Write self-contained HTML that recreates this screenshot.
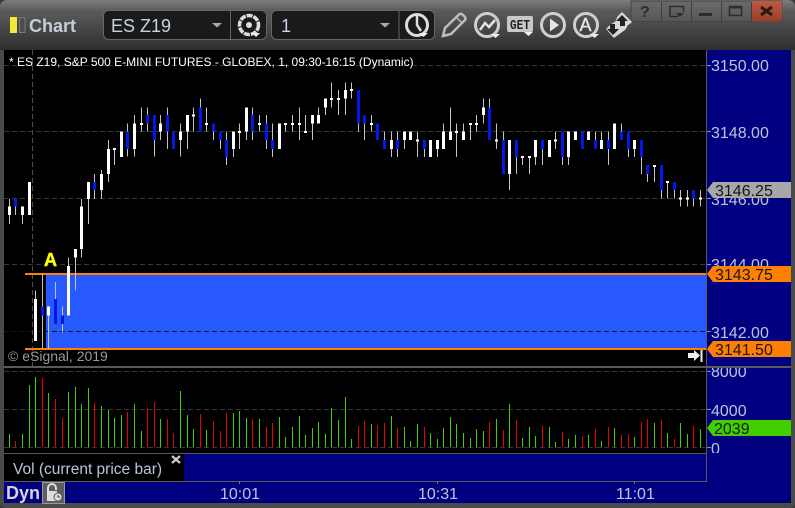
<!DOCTYPE html>
<html><head><meta charset="utf-8"><style>
html,body{margin:0;padding:0;background:#3a3a3a;width:795px;height:508px;overflow:hidden}
svg{display:block}
text{font-family:"Liberation Sans",sans-serif}
.ax{font-size:16px;fill:#b9c6dc}
.tg{font-size:16px;fill:#161616}
</style></head><body>
<svg width="795" height="508" viewBox="0 0 795 508" xmlns="http://www.w3.org/2000/svg">
<defs>
<linearGradient id="top" x1="0" y1="0" x2="0" y2="1"><stop offset="0" stop-color="#7c7c7c"/><stop offset=".1" stop-color="#6f6f6f"/><stop offset=".2" stop-color="#5c5c5c"/><stop offset="1" stop-color="#2e2e2e"/></linearGradient>
<linearGradient id="btn" x1="0" y1="0" x2="0" y2="1"><stop offset="0" stop-color="#6a6a6a"/><stop offset="1" stop-color="#575757"/></linearGradient>
<linearGradient id="cls" x1="0" y1="0" x2="0" y2="1"><stop offset="0" stop-color="#bd5a44"/><stop offset="1" stop-color="#9a3f2b"/></linearGradient>
</defs>
<!-- frame -->
<rect width="795" height="508" rx="6" fill="#4a4a4a"/>
<path d="M0 50V8Q0 0 8 0H787Q795 0 795 8V50Z" fill="url(#top)"/>
<!-- chart background -->
<rect x="4" y="50" width="702" height="317" fill="#000"/>
<rect x="707" y="50" width="84" height="453" fill="#000080"/>
<rect x="4" y="368" width="702" height="85" fill="#000"/>
<rect x="4" y="454" width="180" height="27" fill="#000"/>
<rect x="184" y="454" width="522" height="27" fill="#000080"/>
<rect x="4" y="482" width="703" height="21" fill="#000080"/>
<!-- blue zone -->
<rect x="46" y="274" width="660" height="75" fill="#2659ff"/>
<!-- grid -->
<g stroke="#363636" stroke-width="1" stroke-dasharray="5 3" shape-rendering="crispEdges">
<path d="M4 65.5H706M4 131.5H706M4 198.5H706M4 264.5H706M4 371.5H706M4 409.5H706M4 447.5H706"/>
<path d="M4 331.5H706" stroke="#141414"/>
<path d="M32.5 50V366" stroke="#4c4c4c"/>
</g>
<!-- header -->
<text x="9" y="66" font-size="12" fill="#fff">* ES Z19, S&amp;P 500 E-MINI FUTURES - GLOBEX, 1, 09:30-16:15 (Dynamic)</text>
<!-- zone borders -->
<rect x="25" y="273" width="681" height="2" fill="#ff8000"/>
<rect x="25" y="348" width="681" height="2" fill="#ff8000"/>
<!-- candles -->
<g shape-rendering="crispEdges" fill="none">
<g transform="translate(0 170) scale(.33333)">
<path stroke="#c4c4c4" stroke-width="3" d="M28 87V162M46 87V135M67 110V162M107 362V513M127 312V537M145 410V537M166 336V462M187 410V487M205 262V437M226 237V362M245 87V262M265 87V162M284 12V87M304 0V87M325 0V36"/>
<path stroke="#fff" stroke-width="9" d="M28 110V135M67 110V135M88 36V135M107 387V513M145 410V437M205 288V437M226 237V262M245 110V237M265 36V87M304 12V60M325 0V12"/>
<path stroke="#0018e8" stroke-width="9" d="M46 87V110M127 410V437M166 387V462M187 437V462M284 36V60"/>
</g>
<g transform="translate(100 80) scale(.33333)">
<path stroke="#c4c4c4" stroke-width="3" d="M25 180V300M44 205V255M83 130V230M103 105V230M124 82V155M143 82V155M163 105V230M182 105V180M202 82V207M241 130V230M262 105V207M281 82V155M301 55V155M320 82V155M340 130V180M361 155V207M380 155V255M400 155V231M418 130V207M439 82V180M458 82V180M478 105V155M499 105V207M518 130V231M557 130V155M577 105V155M598 82V180M617 105V155M637 105V180M656 82V130M677 55V105M695 7V82M716 30V105M736 7V105M755 7V55M775 30V155M794 105V180M814 105V155M832 130V180M853 155V207M874 155V231M893 155V231M913 155V207"/>
<path stroke="#fff" stroke-width="9" d="M25 207V282M44 204V210M65 155V231M103 130V207M124 129V135M182 130V155M241 155V180M262 105V155M281 104V110M320 129V135M400 155V207M418 153V159M439 82V155M478 129V135M538 130V207M557 129V135M577 129V135M598 129V135M617 153V159M637 105V130M656 105V130M677 55V82M695 54V60M716 54V60M736 30V55M755 27V33M814 129V135M874 180V207M913 155V180"/>
<path stroke="#0018e8" stroke-width="9" d="M83 155V207M143 105V130M163 105V180M202 105V155M221 155V207M301 82V155M340 130V155M361 155V180M380 180V231M458 105V155M499 130V180M518 180V207M775 30V130M794 105V130M832 130V180M853 180V207M893 180V207"/>
</g>
<g transform="translate(400 80) scale(.33333)">
<path stroke="#c4c4c4" stroke-width="3" d="M52 155V231M73 180V231M112 180V231M131 130V207M151 82V180M170 130V231M190 130V180M211 130V180M229 105V155M250 55V130M268 55V180M289 130V207M310 155V282M328 180V330M349 180V282M367 231V255M388 231V282M406 180V255M427 180V255M466 155V207M487 155V255M505 155V255M586 155V207M604 155V207M625 155V255M664 130V180M685 155V231M703 180V231M724 180V282M743 255V306M763 255V306M784 255V356M802 306V356M823 306V356M841 330V380M862 330V380M880 330V380M901 330V380"/>
<path stroke="#fff" stroke-width="9" d="M32 155V180M52 179V185M92 180V231M112 180V207M131 155V207M151 155V180M170 153V159M190 155V180M211 129V135M229 129V135M250 82V105M289 179V185M328 180V282M367 228V234M388 228V234M406 180V231M448 180V231M466 179V185M505 155V231M526 155V180M565 155V180M604 180V207M643 130V207M703 180V207M763 255V261M802 303V309M841 353V359M862 353V359M901 353V359"/>
<path stroke="#0018e8" stroke-width="9" d="M73 180V207M268 82V180M310 180V282M349 180V231M427 180V207M487 155V231M547 155V207M586 180V207M625 180V207M664 155V180M685 155V207M724 180V231M743 255V282M784 255V330M823 306V330M880 330V356"/>
</g>
<!-- volume -->
<g transform="translate(0 365) scale(.33333)" stroke-width="3">
<path stroke="#3fd000" d="M28 207V248M67 207V248M88 60V248M107 36V248M145 84V248M205 81V248M226 66V248M244 117V248M265 69V248M304 123V248M325 135V248M343 159V248M364 150V248M403 117V248M424 198V248M481 162V248M541 78V248M562 150V248M580 192V248M619 195V248M700 144V248M718 138V248M739 159V248M778 162V248"/>
<path stroke="#e60000" d="M46 228V248M127 39V248M166 102V248M187 159V248M283 114V248M382 141V248M442 129V248M463 111V248M502 162V248M520 204V248M601 147V248M640 168V248M661 198V248M679 144V248M757 162V248"/>
</g>
<g transform="translate(260 365) scale(.33333)" stroke-width="3">
<path stroke="#3fd000" d="M58 156V248M76 216V248M97 186V248M118 153V248M136 210V248M157 189V248M175 171V248M196 207V248M214 129V248M235 165V248M256 96V248M274 222V248M334 177V248M394 153V248M433 186V248M451 228V248M472 177V248M511 204V248M532 222V248M550 189V248M571 156V248M589 177V248M610 204V248M631 219V248M649 192V248M670 198V248M709 162V248M748 117V248"/>
<path stroke="#e60000" d="M19 186V248M37 174V248M295 183V248M313 168V248M352 180V248M373 174V248M412 189V248M493 186V248M688 171V248M730 195V248M769 165V248"/>
</g>
<g transform="translate(520 340) scale(.33333)" stroke-width="3">
<path stroke="#3fd000" d="M7 294V323M28 261V323M46 288V323M88 261V323M106 306V323M145 297V323M166 285V323M205 285V323M244 303V323M283 264V323M343 291V323M403 249V323M442 279V323M481 249V323M502 282V323M541 267V323"/>
<path stroke="#e60000" d="M67 258V323M127 276V323M187 288V323M226 267V323M265 261V323M304 285V323M325 282V323M364 246V323M382 237V323M424 240V323M463 297V323M520 258V323"/>
</g>
</g>
<text x="44" y="266" font-size="18" font-weight="700" fill="#ffff00" stroke="#ffff00" stroke-width=".4">A</text>
<text x="8" y="361" font-size="14" fill="#9a9a9a">© eSignal, 2019</text>
<!-- jump to end icon -->
<path d="M688 353H694V350L700 355.500L694 361V358H688Z" fill="#eee"/>
<rect x="700.500" y="350" width="2" height="12" fill="#eee"/>
<!-- dividers -->
<g shape-rendering="crispEdges">
<rect x="4" y="366" width="787" height="2" fill="#5a5a5a"/>
<rect x="706" y="50" width="1" height="431" fill="#5a5a5a"/>
<rect x="4" y="453" width="702" height="1" fill="#5a5a5a"/>
<rect x="4" y="481" width="703" height="1" fill="#5a5a5a"/>
<rect x="239" y="481" width="1" height="3" fill="#777"/>
<rect x="437" y="481" width="1" height="3" fill="#777"/>
<rect x="634" y="481" width="1" height="3" fill="#777"/>
<path d="M707 65.500H711M707 131.500H711M707 198.500H711M707 264.500H711M707 331.500H711M707 371.500H711M707 409.500H711M707 447.500H711" stroke="#8a94a8"/>
</g>
<!-- axis -->
<text class="ax" x="711" y="71">3150.00</text>
<text class="ax" x="711" y="138">3148.00</text>
<text class="ax" x="711" y="205">3146.00</text>
<text class="ax" x="711" y="270">3144.00</text>
<text class="ax" x="711" y="338">3142.00</text>
<svg x="707" y="368" width="84" height="85" viewBox="707 368 84 85">
<text class="ax" x="711" y="377">8000</text>
<text class="ax" x="711" y="416">4000</text>
<text class="ax" x="711" y="454">0</text>
</svg>
<!-- tags -->
<path d="M707 190L713 182H791V198H713Z" fill="#a7a7aa"/><text class="tg" x="715" y="196">3146.25</text>
<path d="M707 274L713 266H791V282H713Z" fill="#ff8000"/><text class="tg" x="715" y="280">3143.75</text>
<path d="M707 349L713 341H791V357H713Z" fill="#ff8000"/><text class="tg" x="715" y="355">3141.50</text>
<path d="M707 428L713 420H791V436H713Z" fill="#40d000"/><text class="tg" x="714" y="434">2039</text>
<!-- legend -->
<text x="13" y="474" font-size="15.500" fill="#b9c6dc">Vol (current price bar)</text>
<path d="M172 456L180 463M180 456L172 463" stroke="#ccc" stroke-width="2.200"/>
<!-- bottom -->
<text x="6" y="499" font-size="18" font-weight="700" fill="#d4d4dc">Dyn</text>
<rect x="42.500" y="482.500" width="22" height="21" fill="#5e5e5e" stroke="#9a9a9a"/>
<path d="M48 491V488A4 4 0 0 1 56 488V490" fill="none" stroke="#ddd" stroke-width="2"/>
<rect x="47" y="491" width="10" height="10" fill="#ddd"/>
<circle cx="58" cy="497" r="4" fill="#ddd" stroke="#5e5e5e"/>
<path d="M58 495V497H60" stroke="#444" fill="none"/>
<text class="ax" x="220" y="499">10:01</text>
<text class="ax" x="418" y="499">10:31</text>
<text class="ax" x="616" y="499">11:01</text>
<!-- toolbar left -->
<rect x="10" y="17" width="7" height="16" fill="#f6e83a"/>
<rect x="19.500" y="17.500" width="5.500" height="15" fill="#4c4c4c" stroke="#7a7a7a"/>
<text x="29" y="32" font-size="18" font-weight="700" fill="#c5cdd8">Chart</text>
<rect x="103.500" y="10.500" width="163" height="29" rx="5" fill="#1a1a1a" stroke="#666"/>
<path d="M230.500 11V39" stroke="#666"/>
<text x="111" y="32" font-size="18" fill="#c8d4e4">ES Z19</text>
<path d="M212 23H222L217 27.500Z" fill="#aaa"/>
<rect x="271.500" y="10.500" width="163" height="29" rx="5" fill="#1a1a1a" stroke="#666"/>
<path d="M399 11V39" stroke="#666"/>
<text x="281" y="32" font-size="18" fill="#c8d4e4">1</text>
<path d="M380 23H390L385 27.500Z" fill="#aaa"/>
<!-- gear -->
<circle cx="249" cy="25" r="9.500" fill="none" stroke="#ddd" stroke-width="3.500" stroke-dasharray="6 1"/>
<circle cx="249" cy="25" r="3" fill="#ddd"/>
<path d="M252 33H260L256 37Z" fill="#eee"/>
<!-- clock -->
<circle cx="417" cy="25" r="10.500" fill="none" stroke="#ddd" stroke-width="3"/>
<path d="M417 16V25L421 31" fill="none" stroke="#ddd" stroke-width="2.500"/>
<path d="M419 33H428L423.500 37Z" fill="#eee"/>
<!-- pencil -->
<path d="M443 36L445 28L459 14.500Q461 13 463 15L465 17Q466 19 465 20L451 34Z" fill="none" stroke="#bdbdbd" stroke-width="2.500"/>
<path d="M456 17L462 23" stroke="#bdbdbd" stroke-width="1.500"/>
<!-- line chart -->
<circle cx="487" cy="25" r="11.500" fill="none" stroke="#cfcfcf" stroke-width="3"/>
<path d="M480 30L485 23L489 27L495 20" fill="none" stroke="#e4e4e4" stroke-width="2.500"/>
<path d="M491 34H500L495.500 38Z" fill="#eee"/>
<!-- GET -->
<rect x="507" y="16" width="26" height="16" rx="2" fill="#c8c8c8"/>
<text x="510" y="29" font-size="14" font-weight="700" fill="#222" textLength="20" lengthAdjust="spacingAndGlyphs" style="font-family:'Liberation Mono',monospace">GET</text>
<path d="M524 32H533L528.500 36Z" fill="#eee"/>
<!-- play -->
<circle cx="553" cy="25" r="11.500" fill="none" stroke="#cfcfcf" stroke-width="3"/>
<path d="M550 18.500L559 25L550 31.500Z" fill="#e4e4e4"/>
<!-- A -->
<circle cx="586" cy="25" r="11.500" fill="none" stroke="#cfcfcf" stroke-width="3"/>
<text x="579.500" y="31" font-size="18" fill="#e4e4e4" stroke="#e4e4e4" stroke-width=".4">A</text>
<path d="M590 34H599L594.500 38Z" fill="#eee"/>
<!-- swap -->
<path d="M622 13L631 22L627 25L625 29L614 37L607 29L611 25L616 22L618 17Z" fill="#d8d8d8" stroke="#d8d8d8" stroke-width="1.500" stroke-linejoin="round"/>
<path d="M622 15L628 21H625V26H620V21H616Z" fill="#222"/>
<path d="M613 35L607 29H610V24H615V29H619Z" fill="#222"/>
<!-- window buttons -->
<path d="M631 1H782V17Q782 21.500 778 21.500H635Q631 21.500 631 17Z" fill="url(#btn)" stroke="#444"/>
<path d="M751 1H782V17Q782 21.500 778 21.500H751Z" fill="url(#cls)"/>
<path d="M661.500 2V21M691.500 2V21M721.500 2V21M751.500 2V21" stroke="#3e3e3e"/>
<text x="640" y="17" font-size="16" font-weight="700" fill="#2c2c2c">?</text>
<path d="M678 16.500H670V6.500H683.500V12" fill="none" stroke="#2c2c2c" stroke-width="1.500"/>
<path d="M676 13H684L680 17Z" fill="#2c2c2c"/>
<rect x="699" y="13" width="13" height="3" fill="#2c2c2c"/>
<rect x="729.500" y="6.500" width="12" height="9" fill="none" stroke="#2c2c2c" stroke-width="1.500"/>
<rect x="729" y="6" width="13" height="2.500" fill="#2c2c2c"/>
<path d="M761 7L772 15M772 7L761 15" stroke="#2a1a16" stroke-width="3"/>
</svg>
</body></html>
